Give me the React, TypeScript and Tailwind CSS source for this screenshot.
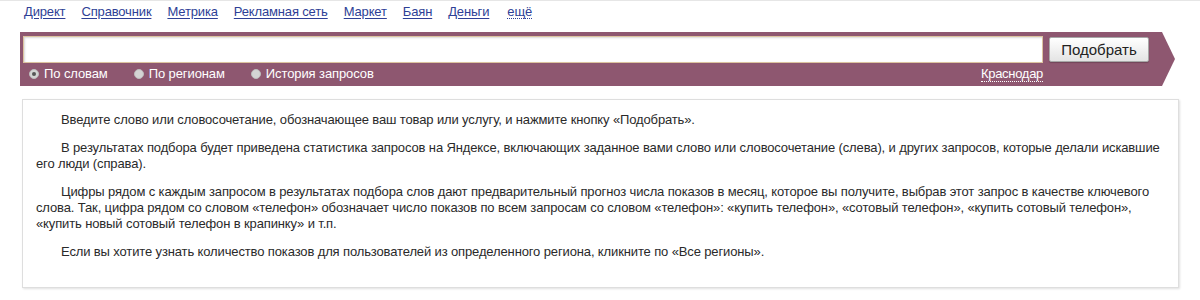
import React from "react";

const links = ["Директ", "Справочник", "Метрика", "Рекламная сеть", "Маркет", "Баян", "Деньги"];

function Radio({ checked, label }: { checked?: boolean; label: string }) {
  return (
    <span className="flex items-center gap-[5px]">
      <span className="w-[10px] h-[10px] rounded-full bg-[#d4d4d4] border border-[#bdbdbd] flex items-center justify-center">
        {checked && <span className="w-[4px] h-[4px] rounded-full bg-[#555]" />}
      </span>
      <span>{label}</span>
    </span>
  );
}

export default function App() {
  return (
    <div className="w-[1200px] h-[300px] bg-white font-['Liberation_Sans',Arial,sans-serif] text-[13px] border-t border-[#e6e6e6]">
      <nav className="flex gap-[16px] pl-[24px] pt-[3px] h-[31px] leading-[15px] tracking-[-0.15px]">
        {links.map((l) => (
          <a key={l} className="text-[#2e3f96] underline underline-offset-[2px] decoration-[#2e3f96]">
            {l}
          </a>
        ))}
        <a className="text-[#2e3f96] ml-[2px] border-b border-dotted border-[#2e3f96] h-[15px]">ещё</a>
      </nav>
      <div className="flex ml-[20px]">
        <div className="w-[1142px] h-[54px] bg-[#8e5770] pt-[4px] pl-[3px]">
          <div className="flex gap-[6px]">
            <div className="w-[1020px] h-[27px] bg-white border border-[#dcc39f] shadow-[inset_1px_1px_2px_rgba(0,0,0,0.15)]" />
            <button className="w-[100px] h-[25px] mt-[1px] rounded-[2px] border border-[#a7a7a7] bg-gradient-to-b from-white to-[#e4e4e4] text-[15px] text-[#222] leading-[23px] shadow-[0_1px_1px_rgba(0,0,0,0.2)]">
              Подобрать
            </button>
          </div>
          <div className="w-[1020px] flex items-center text-white mt-[3px] pl-[6px] h-[16px]">
            <div className="flex gap-[26px] tracking-[-0.1px]">
              <Radio checked label="По словам" />
              <Radio label="По регионам" />
              <Radio label="История запросов" />
            </div>
            <span className="ml-auto border-b border-dotted border-white leading-[14px] tracking-[-0.3px]">Краснодар</span>
          </div>
        </div>
        <div className="w-0 h-0 border-y-[27px] border-y-transparent border-l-[13px] border-l-[#8e5770]" />
      </div>
      <div className="ml-[22px] mt-[13px] w-[1157px] h-[189px] border border-[#dedede] shadow-[1px_1px_2px_rgba(0,0,0,0.12)] px-[13px] pt-[12px] text-[#2a2a2a] leading-[16px] tracking-[-0.13px]">
        <p className="indent-[25px] mb-[12px]">
          Введите слово или словосочетание, обозначающее ваш товар или услугу, и нажмите кнопку «Подобрать».
        </p>
        <p className="indent-[25px] mb-[12px]">
          В результатах подбора будет приведена статистика запросов на Яндексе, включающих заданное вами слово или словосочетание (слева), и других запросов, которые делали искавшие его люди (справа).
        </p>
        <p className="indent-[25px] mb-[12px]">
          Цифры рядом с каждым запросом в результатах подбора слов дают предварительный прогноз числа показов в месяц, которое вы получите, выбрав этот запрос в качестве ключевого слова. Так, цифра рядом со словом «телефон» обозначает число показов по всем запросам со словом «телефон»: «купить телефон», «сотовый телефон», «купить сотовый телефон», «купить новый сотовый телефон в крапинку» и т.п.
        </p>
        <p className="indent-[25px]">
          Если вы хотите узнать количество показов для пользователей из определенного региона, кликните по «Все регионы».
        </p>
      </div>
    </div>
  );
}
